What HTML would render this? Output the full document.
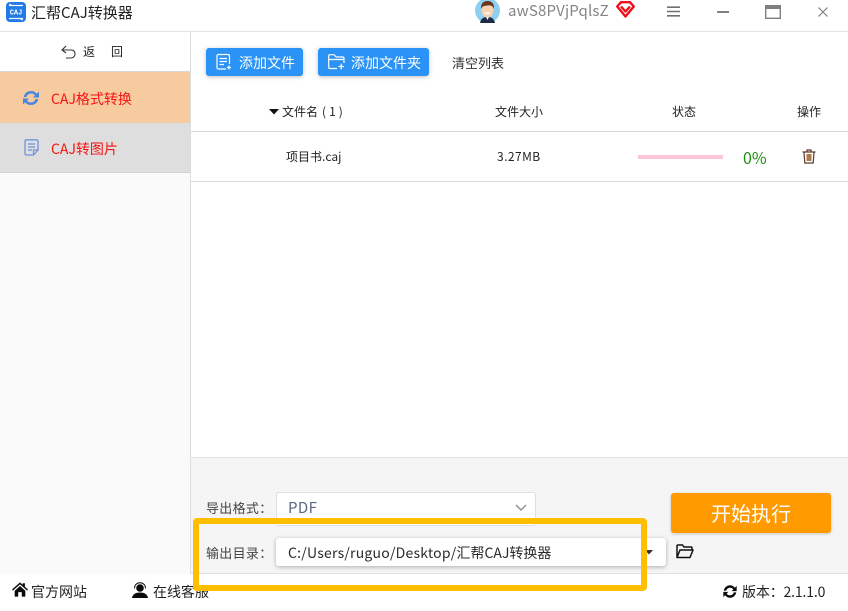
<!DOCTYPE html>
<html lang="zh">
<head>
<meta charset="utf-8">
<title>汇帮CAJ转换器</title>
<style>
html,body{margin:0;padding:0;background:#fff}
#app{position:relative;width:848px;height:611px;overflow:hidden;background:#fff;font-family:"Noto Sans CJK SC","Liberation Sans",sans-serif;color:#222}
.a{position:absolute}
.t{position:absolute;white-space:nowrap;line-height:20px}
svg{position:absolute;display:block;overflow:visible}
.btn{position:absolute;background:#2b93f5;border-radius:3px;box-shadow:0 1px 4px rgba(0,0,0,.25)}
</style>
</head>
<body>
<div id="app">
  <!-- title bar -->
  <div class="a" style="left:0;top:31px;width:848px;height:1px;background:#e2e2e2"></div>
  <svg style="left:6px;top:2px" width="20" height="20" viewBox="0 0 20 20">
    <rect x="0" y="0" width="20" height="20" rx="4" fill="#1f7be8"/>
    <path d="M3 3.500H17M3 3.500L5 2M3 16.500H17M17 16.500L15 18" stroke="#fff" stroke-width="1.200" fill="none"/>
    <text x="10" y="12.600" font-size="7" font-weight="700" fill="#fff" text-anchor="middle" font-family="Liberation Mono,monospace">CAJ</text>
  </svg>
  <div class="t" style="left:31px;top:3px;font-size:15px;color:#222">汇帮CAJ转换器</div>

  <svg style="left:475px;top:0" width="25" height="23" viewBox="0 0 25 23">
    <circle cx="12.500" cy="10.500" r="12.500" fill="#8fd0f2"/>
    <path d="M5 23C6 18 9 17 12.500 17S19 18 20 23Z" fill="#1d2c44"/>
    <path d="M11 17L12.500 20L14 17Z" fill="#fff"/>
    <ellipse cx="12.500" cy="10.500" rx="6" ry="7" fill="#f9d2b4"/>
    <path d="M6 9C5.500 3 9 1 12.500 1S19.500 3 19 9C18 6 16 5 12.500 5.500S7 6 6 9Z" fill="#6b3519"/>
    <path d="M9 12.500Q12.500 16 16 12.500Z" fill="#fff"/>
  </svg>
  <div class="t" style="left:508px;top:1px;font-size:15px;color:#858585;letter-spacing:.18px">awS8PVjPqlsZ</div>
  <svg style="left:616px;top:1px" width="19" height="17" viewBox="0 0 19 17">
    <path d="M5 1.200H14L17.800 5.500 9.500 15.500 1.200 5.500Z M5 5.500 9.500 10.500 14 5.500" fill="none" stroke="#f0101c" stroke-width="2.400" stroke-linejoin="round"/>
  </svg>
  <svg style="left:667px;top:6px" width="13" height="11" viewBox="0 0 13 11"><path d="M0 1.200H13M0 5.500H13M0 9.800H13" stroke="#707070" stroke-width="1.600"/></svg>
  <div class="a" style="left:717px;top:11px;width:12px;height:2px;background:#808080"></div>
  <svg style="left:765px;top:5px" width="16" height="14" viewBox="0 0 16 14"><rect x=".7" y=".7" width="14.600" height="12.600" fill="none" stroke="#808080" stroke-width="1.400"/><rect x="0" y="0" width="16" height="4" fill="#808080"/></svg>
  <svg style="left:818px;top:7px" width="10" height="10" viewBox="0 0 10 10"><path d="M.5 .5L9.500 9.500M9.500 .5L.5 9.500" stroke="#808080" stroke-width="1.200"/></svg>

  <!-- sidebar -->
  <div class="a" style="left:0;top:32px;width:190px;height:542px;background:#fafafa"></div>
  <div class="a" style="left:0;top:32px;width:190px;height:39px;background:#fff"></div>
  <div class="a" style="left:190px;top:32px;width:1px;height:542px;background:#dcdcdc"></div>
  <svg style="left:61px;top:45px" width="15" height="14" viewBox="0 0 15 14"><path d="M5 1L1 5L5 8M1 5H10C13 5 14 7 14 9S12.500 13 10 13H5" fill="none" stroke="#333" stroke-width="1.100"/></svg>
  <div class="t" style="left:83px;top:42px;font-size:12px;color:#222">返</div>
  <div class="t" style="left:111px;top:42px;font-size:12px;color:#222">回</div>
  <div class="a" style="left:0;top:71px;width:190px;height:52px;background:#f7cba0;border-top:1px solid #d8d8d8;box-sizing:border-box"></div>
  <svg style="left:22px;top:89px" width="18" height="18" viewBox="0 0 18 18">
    <path d="M1.800 8C2.500 4 5.500 2 9 2C11.500 2 13.500 3 14.800 4.800L17 2.500V8.500H11L13 6.500C12 5 10.700 4.500 9 4.500C6.800 4.500 5 6 4.500 8Z M16.200 10C15.500 14 12.500 16 9 16C6.500 16 4.500 15 3.200 13.200L1 15.500V9.500H7L5 11.500C6 13 7.300 13.500 9 13.500C11.200 13.500 13 12 13.500 10Z" fill="#4a86e0"/>
  </svg>
  <div class="t" style="left:51px;top:89px;font-size:14px;color:#f8130f">CAJ格式转换</div>
  <div class="a" style="left:0;top:123px;width:190px;height:50px;background:#dedede;border-bottom:1px solid #d2d2d2;box-sizing:border-box"></div>
  <svg style="left:24px;top:139px" width="15" height="17" viewBox="0 0 15 17">
    <path d="M2.500 .8H12.500C13.500 .8 14 1.500 14 2.500V11L9.500 16H2.500C1.500 16 1 15.300 1 14.500V2.500C1 1.500 1.500 .8 2.500 .8Z M4 5H11M4 8H11M4 11H8M14 11H9.500V16" fill="none" stroke="#6e94de" stroke-width="1.300"/>
  </svg>
  <div class="t" style="left:51px;top:139px;font-size:14px;color:#f8130f">CAJ转图片</div>

  <!-- toolbar -->
  <div class="btn" style="left:206px;top:48px;width:97px;height:28px"></div>
  <svg style="left:216px;top:54px" width="16" height="16" viewBox="0 0 16 16">
    <path d="M10 15H2.500C1.500 15 1 14.500 1 13.500V2C1 1 1.500 .5 2.500 .5H12C13 .5 13.500 1 13.500 2V10M3.500 4.500H11M3.500 7.500H11M3.500 10.500H8M11 13.500H15M13 11.500V15.500" fill="none" stroke="#fff" stroke-width="1.200"/>
  </svg>
  <div class="t" style="left:239px;top:53px;font-size:14px;color:#fff">添加文件</div>
  <div class="btn" style="left:318px;top:48px;width:111px;height:28px"></div>
  <svg style="left:328px;top:54px" width="17" height="16" viewBox="0 0 17 16">
    <path d="M9 14.500H2C1 14.500 .7 14 .7 13V2C.7 1 1 .7 2 .7H6L8 3H14.500C15.500 3 16 3.500 16 4.500V9M1 5.500H16M10.500 12.500H16M13.200 9.800V15.500" fill="none" stroke="#fff" stroke-width="1.200"/>
  </svg>
  <div class="t" style="left:351px;top:53px;font-size:14px;color:#fff">添加文件夹</div>
  <div class="t" style="left:452px;top:53px;font-size:13px;color:#333">清空列表</div>

  <!-- table -->
  <svg style="left:269px;top:109px" width="10" height="6" viewBox="0 0 10 6"><path d="M0 0H10L5 5.500Z" fill="#111"/></svg>
  <div class="t" style="left:282px;top:102px;font-size:12px;color:#222">文件名<span style="margin-left:4px;letter-spacing:3px">(1)</span></div>
  <div class="t" style="left:495px;top:102px;font-size:12px;color:#222">文件大小</div>
  <div class="t" style="left:672px;top:102px;font-size:12px;color:#222">状态</div>
  <div class="t" style="left:797px;top:102px;font-size:12px;color:#222">操作</div>
  <div class="a" style="left:191px;top:131px;width:657px;height:1px;background:#d5d5d5"></div>
  <div class="t" style="left:286px;top:147px;font-size:12px;color:#222">项目书.caj</div>
  <div class="t" style="left:497px;top:147px;font-size:12px;color:#222;letter-spacing:.45px">3.27MB</div>
  <div class="a" style="left:638px;top:155px;width:85px;height:4px;background:#fcc6d8"></div>
  <div class="t" style="left:743px;top:147px;font-size:16px;color:#1d8a12">0%</div>
  <svg style="left:802px;top:149px" width="14" height="15" viewBox="0 0 14 15">
    <path d="M.5 3H13.500M5 3V1H9V3M2 3L2.800 14H11.200L12 3" fill="none" stroke="#5a3a2a" stroke-width="1.200"/>
    <rect x="4.500" y="5" width="5" height="7" fill="#b0794a"/>
  </svg>
  <div class="a" style="left:191px;top:181px;width:657px;height:1px;background:#d8d8d8"></div>

  <!-- bottom panel -->
  <div class="a" style="left:191px;top:457px;width:657px;height:117px;background:#f5f5f5;border-top:1px solid #e2e2e2;border-bottom:1px solid #e2e2e2;box-sizing:border-box"></div>
  <div class="t" style="left:206px;top:498px;font-size:13px;color:#444;letter-spacing:.3px">导出格式：</div>
  <div class="a" style="left:276px;top:492px;width:260px;height:34px;background:#fff;border:1px solid #dcdfe6;border-radius:3px;box-sizing:border-box"></div>
  <div class="t" style="left:288px;top:498px;font-size:15px;color:#5a6580;letter-spacing:.4px">PDF</div>
  <svg style="left:515px;top:504px" width="12" height="7" viewBox="0 0 12 7"><path d="M1 1L6 6L11 1" fill="none" stroke="#909399" stroke-width="1.500"/></svg>

  <div class="t" style="left:206px;top:543px;font-size:13px;color:#444;letter-spacing:.3px">输出目录：</div>
  <div class="a" style="left:276px;top:538px;width:390px;height:28px;background:#fff;border-radius:3px;box-shadow:0 1px 4px rgba(0,0,0,.3)"></div>
  <div class="t" style="left:288px;top:543px;font-size:14px;color:#2a2a2a"><span style="letter-spacing:.22px">C:/Users/ruguo/Desktop/</span>汇帮CAJ转换器</div>
  <svg style="left:645px;top:550px" width="8" height="5" viewBox="0 0 8 5"><path d="M0 0H8L4 4.500Z" fill="#333"/></svg>
  <svg style="left:676px;top:544px" width="18" height="15" viewBox="0 0 18 15">
    <path d="M1 13.500V2C1 1.300 1.300 1 2 1H6.500L8 3H15C15.700 3 16 3.300 16 4V6M1 13.500H14L17 6H4L1 13.500Z" fill="none" stroke="#111" stroke-width="1.500" stroke-linejoin="round"/>
  </svg>

  <div class="a" style="left:671px;top:493px;width:160px;height:40px;background:#ff9a00;border-radius:3px;box-shadow:0 1px 3px rgba(0,0,0,.2)"></div>
  <div class="t" style="left:711px;top:503px;font-size:20px;color:#fff">开始执行</div>

  <!-- footer -->
  <svg style="left:12px;top:582px" width="16" height="15" viewBox="0 0 18 16">
    <path d="M9 0L0 8L1 9.200L9 2.200L17 9.200L18 8L14.500 4.900V1H12V2.700Z M3 9.500L9 4L15 9.500V16H11V11H7V16H3Z" fill="#0b0b0b"/>
  </svg>
  <div class="t" style="left:31px;top:582px;font-size:14px;color:#222">官方网站</div>
  <svg style="left:132px;top:582px" width="16" height="16" viewBox="0 0 16 16">
    <circle cx="8" cy="6" r="3.800" fill="#0b0b0b"/>
    <path d="M2.500 6.500C2.500 3 5 .7 8 .7S13.500 3 13.500 6.500" fill="none" stroke="#0b0b0b" stroke-width="1"/>
    <path d="M0 16C.5 12 4 10.500 8 10.500S15.500 12 16 16Z" fill="#0b0b0b"/>
  </svg>
  <div class="t" style="left:153px;top:582px;font-size:14px;color:#222">在线客服</div>

  <svg style="left:722px;top:584px" width="16" height="15" viewBox="0 0 18 18">
    <path d="M1.500 8C2.200 4 5.500 1.500 9 1.500C11.500 1.500 13.500 2.700 14.800 4.500L17 2.200V8.500H11L13 6.500C12 5 10.700 4.500 9 4.500C6.800 4.500 5 6 4.500 8Z M16.500 10C15.800 14 12.500 16.500 9 16.500C6.500 16.500 4.500 15.300 3.200 13.500L1 15.800V9.500H7L5 11.500C6 13 7.300 13.500 9 13.500C11.200 13.500 13 12 13.500 10Z" fill="#0b0b0b"/>
  </svg>
  <div class="t" style="left:742px;top:582px;font-size:14px;color:#222;letter-spacing:-.15px">版本：2.1.1.0</div>

  <!-- highlight box -->
  <div class="a" style="left:193px;top:518px;width:454px;height:73px;border:6px solid #ffbf00;border-radius:4px;box-sizing:border-box"></div>
</div>
</body>
</html>
